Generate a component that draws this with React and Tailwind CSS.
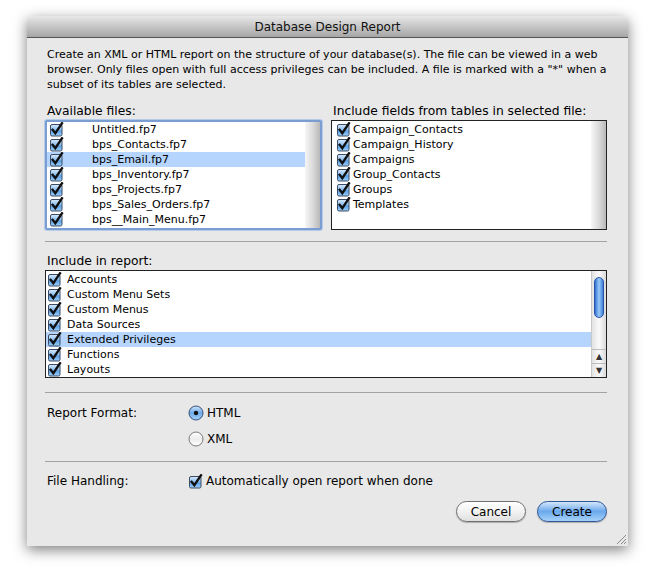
import React from 'react';

const files = [
  'Untitled.fp7',
  'bps_Contacts.fp7',
  'bps_Email.fp7',
  'bps_Inventory.fp7',
  'bps_Projects.fp7',
  'bps_Sales_Orders.fp7',
  'bps__Main_Menu.fp7',
];

const tables = [
  'Campaign_Contacts',
  'Campaign_History',
  'Campaigns',
  'Group_Contacts',
  'Groups',
  'Templates',
];

const reportItems = [
  'Accounts',
  'Custom Menu Sets',
  'Custom Menus',
  'Data Sources',
  'Extended Privileges',
  'Functions',
  'Layouts',
];

function Check() {
  return (
    <svg width="15" height="15" viewBox="0 0 15 15" className="shrink-0">
      <defs>
        <linearGradient id="cbg" x1="0" y1="0" x2="0" y2="1">
          <stop offset="0" stopColor="#d9ebfc" />
          <stop offset="0.45" stopColor="#8fc0f0" />
          <stop offset="0.55" stopColor="#5a9fe6" />
          <stop offset="1" stopColor="#9fd0fa" />
        </linearGradient>
      </defs>
      <rect x="1.5" y="2.5" width="11.5" height="11.5" rx="1.5" fill="url(#cbg)" stroke="#3d4c63" />
      <path d="M3.6 7.8 L6.3 11.2 L13 1.2" stroke="#111" strokeWidth="2.3" fill="none" strokeLinecap="square" />
    </svg>
  );
}

function Radio({ on }) {
  return (
    <svg width="16" height="16" viewBox="0 0 16 16" className="shrink-0">
      <defs>
        <linearGradient id="rbOn" x1="0" y1="0" x2="0" y2="1">
          <stop offset="0" stopColor="#cfe4fb" />
          <stop offset="0.5" stopColor="#6eaaea" />
          <stop offset="1" stopColor="#a6d3fb" />
        </linearGradient>
        <linearGradient id="rbOff" x1="0" y1="0" x2="0" y2="1">
          <stop offset="0" stopColor="#ffffff" />
          <stop offset="0.5" stopColor="#ececec" />
          <stop offset="1" stopColor="#ffffff" />
        </linearGradient>
      </defs>
      <circle cx="8" cy="8" r="7" fill={on ? 'url(#rbOn)' : 'url(#rbOff)'} stroke={on ? '#36507a' : '#7a7a7a'} />
      {on && <circle cx="8" cy="8" r="2.2" fill="#111" />}
    </svg>
  );
}

function EmptyTrack() {
  return (
    <div className="w-[15px] shrink-0 bg-gradient-to-r from-[#f6f6f6] via-[#dcdcdc] to-[#b9b9b9]" />
  );
}

function ScrollBar() {
  return (
    <div className="flex w-[15px] shrink-0 flex-col border-l border-[#c8c8c8] bg-gradient-to-r from-[#e2e2e2] via-[#fafafa] to-[#dadada]">
      <div className="flex-1 px-[2px] pt-[6px]">
        <div className="h-[41px] rounded-full border border-[#2a55a6] bg-gradient-to-r from-[#2f6fd4] via-[#9ccaf6] to-[#3b7fdd]" />
      </div>
      <div className="flex h-[14px] items-center justify-center border-t border-[#bdbdbd] text-[8px] leading-none text-[#333]">
        ▲
      </div>
      <div className="flex h-[14px] items-center justify-center border-t border-[#bdbdbd] text-[8px] leading-none text-[#333]">
        ▼
      </div>
    </div>
  );
}

export default function App() {
  return (
    <div
      className="min-h-[578px] w-[656px] bg-white pl-[27px] pt-[16px] text-black"
      style={{ fontFamily: '"DejaVu Sans", "Noto Sans", sans-serif' }}
    >
      <div className="flex h-[530px] w-[601px] flex-col rounded-t-[5px] shadow-[0_4px_14px_rgba(0,0,0,0.5)]">
        {/* title bar */}
        <div className="flex h-[22px] items-center justify-center rounded-t-[5px] border-b border-[#555] bg-gradient-to-b from-[#e8e8e8] to-[#a6a6a6] text-[12px] text-[#111]">
          Database Design Report
        </div>

        <div className="relative flex flex-1 flex-col bg-[#e8e8e8] pl-[18px] pr-[21px] pt-[9px] text-[11px]">
          <p className="whitespace-nowrap pl-[2px] text-[11px] leading-[15px]">
            Create an XML or HTML report on the structure of your database(s). The file can be viewed in a web
            <br />
            browser. Only files open with full access privileges can be included. A file is marked with a "*" when a
            <br />
            subset of its tables are selected.
          </p>

          <div className="mt-[11px] flex gap-[9px]">
            <div className="flex w-[277px] flex-col">
              <div className="h-[17px] pl-[2px] text-[12.3px] leading-[17px]">Available files:</div>
              <div className="flex h-[110px] rounded-[2px] border-[2px] border-[#7b9ed2] bg-white shadow-[0_0_0_1px_#b5cbe9]">
                <div className="flex-1 pt-[0px]">
                  {files.map((f, i) => (
                    <div
                      key={f}
                      className={`flex h-[15px] items-center pl-[2px] ${i === 2 ? 'bg-[#b5d5ff]' : ''}`}
                    >
                      <Check />
                      <span className="ml-[28px] leading-none">{f}</span>
                    </div>
                  ))}
                </div>
                <EmptyTrack />
              </div>
            </div>

            <div className="flex flex-1 flex-col">
              <div className="h-[17px] pl-[2px] text-[12.3px] leading-[17px]">
                Include fields from tables in selected file:
              </div>
              <div className="flex h-[110px] border border-[#222] bg-white">
                <div className="flex-1 pt-[1px]">
                  {tables.map((t) => (
                    <div key={t} className="flex h-[15px] items-center pl-[4px]">
                      <Check />
                      <span className="ml-[2px] leading-none">{t}</span>
                    </div>
                  ))}
                </div>
                <EmptyTrack />
              </div>
            </div>
          </div>

          <div className="mt-[11px] h-[2px] border-t border-[#a3a3a3]" />

          <div className="mt-[10px] h-[17px] pl-[2px] text-[12.3px] leading-[17px]">Include in report:</div>
          <div className="flex h-[108px] border border-[#222] bg-white">
            <div className="flex-1 pt-[1px]">
              {reportItems.map((r, i) => (
                <div
                  key={r}
                  className={`flex h-[15px] items-center pl-[1px] ${i === 4 ? 'bg-[#b5d5ff]' : ''}`}
                >
                  <Check />
                  <span className="ml-[5px] leading-none">{r}</span>
                </div>
              ))}
            </div>
            <ScrollBar />
          </div>

          <div className="mt-[14px] h-[2px] border-t border-[#a3a3a3]" />

          <div className="mt-[10px] flex items-center">
            <div className="w-[143px] pl-[2px] text-[12px]">Report Format:</div>
            <div className="flex items-center gap-[3px] text-[12px]">
              <Radio on />
              <span>HTML</span>
            </div>
          </div>
          <div className="mt-[8px] flex items-center">
            <div className="w-[143px]" />
            <div className="flex items-center gap-[3px] text-[12px]">
              <Radio />
              <span>XML</span>
            </div>
          </div>

          <div className="mt-[13px] h-[2px] border-t border-[#a3a3a3]" />

          <div className="mt-[9px] flex items-center">
            <div className="w-[143px] pl-[2px] text-[12px]">File Handling:</div>
            <div className="flex items-center gap-[3px] text-[12px]">
              <Check />
              <span>Automatically open report when done</span>
            </div>
          </div>

          <div className="mt-[11px] flex justify-end gap-[11px]">
            <button
              type="button"
              className="h-[21px] w-[70px] rounded-full border border-[#6f6f6f] bg-gradient-to-b from-white via-[#f2f2f2] to-[#e0e0e0] text-[12px] leading-none text-black shadow-[0_1px_1px_rgba(0,0,0,0.25)]"
            >
              Cancel
            </button>
            <button
              type="button"
              className="h-[21px] w-[70px] rounded-full border border-[#2f5592] bg-gradient-to-b from-[#d3e7fb] via-[#6aa9ec] to-[#a6d2fa] text-[12px] leading-none text-black shadow-[0_1px_1px_rgba(0,0,0,0.25)]"
            >
              Create
            </button>
          </div>

          <svg width="12" height="12" viewBox="0 0 12 12" className="absolute bottom-[1px] right-[1px]">
            <path d="M11 2 L2 11 M11 6 L6 11 M11 9 L9 11" stroke="#8a8a8a" strokeWidth="1" />
          </svg>
        </div>
      </div>
    </div>
  );
}
